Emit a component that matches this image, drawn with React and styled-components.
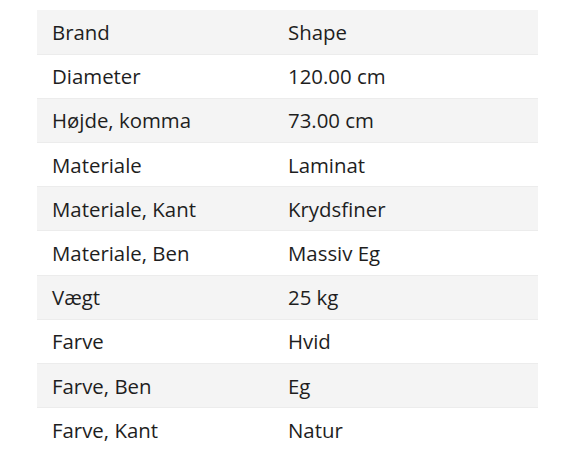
import React from 'react';
import styled, { createGlobalStyle } from 'styled-components';

const GlobalStyle = createGlobalStyle`
  body {
    margin: 0;
    background: #fff;
    font-family: 'Open Sans', 'Liberation Sans', sans-serif;
    color: #1e1e1e;
  }
`;

const Wrapper = styled.div`
  padding: 10px 37px 0 37px;
`;

const Table = styled.table`
  width: 100%;
  border-collapse: collapse;
  font-size: 20.4px;
`;

const Row = styled.tr`
  height: 44.2px;
  background: ${(p) => (p.striped ? '#f4f4f4' : '#fff')};
  border-bottom: 1px solid #ececec;

  &:last-child {
    border-bottom: none;
  }
`;

const Cell = styled.td`
  padding: 0 15px;
  vertical-align: middle;
  width: ${(p) => p.width || 'auto'};
  line-height: 26px;
`;

const rows = [
  ['Brand', 'Shape'],
  ['Diameter', '120.00 cm'],
  ['Højde, komma', '73.00 cm'],
  ['Materiale', 'Laminat'],
  ['Materiale, Kant', 'Krydsfiner'],
  ['Materiale, Ben', 'Massiv Eg'],
  ['Vægt', '25 kg'],
  ['Farve', 'Hvid'],
  ['Farve, Ben', 'Eg'],
  ['Farve, Kant', 'Natur']
];

const App = () => (
  <>
    <GlobalStyle />
    <Wrapper>
      <Table>
        <tbody>
          {rows.map(([label, value], i) => (
            <Row key={label} striped={i % 2 === 0}>
              <Cell width="206px">{label}</Cell>
              <Cell>{value}</Cell>
            </Row>
          ))}
        </tbody>
      </Table>
    </Wrapper>
  </>
);

export default App;
